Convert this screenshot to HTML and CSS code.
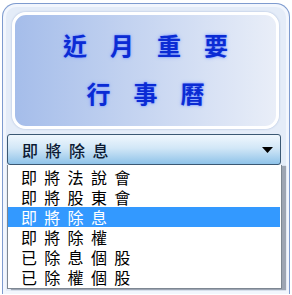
FILE: index.html
```html
<!DOCTYPE html>
<html lang="zh-Hant">
<head>
    <meta charset="UTF-8" />
    <title>近月重要行事曆</title>
    <link rel="stylesheet" href="styles.css">
</head>
<body>
    <div class="panel">
        <div class="title-box">
            <div class="title-line">近月重要</div>
            <div class="title-line">行事曆</div>
        </div>

        <!-- 下拉選單 (展開狀態) -->
        <div class="select-box">
            <span class="select-text">即將除息</span>
            <svg class="select-arrow" width="11" height="6" viewBox="0 0 11 6">
                <polygon points="0,0 11,0 5.5,6" fill="#000" />
            </svg>
        </div>
        <ul class="option-list">
            <li>即將法說會</li>
            <li>即將股東會</li>
            <li class="selected">即將除息</li>
            <li>即將除權</li>
            <li>已除息個股</li>
            <li>已除權個股</li>
        </ul>
    </div>
</body>
</html>
```

FILE: styles.css
```css
body {
    margin: 3px 2px 0 2px;
    background: #ffffff;
    font-family: "Noto Sans CJK TC", "Noto Sans", sans-serif;
}

.panel {
    height: 291px;
    box-sizing: border-box;
    border: 1px solid #7e9bcf;
    border-bottom: none;
    border-radius: 14px 14px 0 0;
    background: #e4ecf8;
    padding: 8px 4px 0 4px;
    box-shadow: inset 0 0 0 3px #f2f6fd;
}

.title-box {
    margin: 0 6px 0 5px;
    border: 3px solid #ffffff;
    border-radius: 14px;
    background: linear-gradient(to right, #a5bdea, #e9eef8);
    padding: 6px 0 9px 0;
    text-align: center;
    box-shadow: 0 0 2px rgba(90, 120, 180, 0.5);
}

.title-line {
    font-size: 24px;
    line-height: 48px;
    font-weight: bold;
    color: #0b2bd4;
    letter-spacing: 23px;
    padding-left: 23px;
    text-shadow: 0 0 2px #6f90ff, 0 0 4px #9fb6ff;
}

.select-box {
    margin-top: 5px;
    width: 274px;
    height: 31px;
    box-sizing: border-box;
    border: 1px solid #3b5873;
    border-radius: 3px;
    background: linear-gradient(to bottom, #f0f7fd, #d2e7f7 45%, #8fc3e9);
    display: flex;
    align-items: center;
    padding: 0 7px 0 14px;
}

.select-text {
    flex: 1;
    font-size: 16px;
    font-weight: 500;
    color: #0c1a33;
    letter-spacing: 7.5px;
}

.option-list {
    list-style: none;
    margin: 0;
    width: 275px;
    box-sizing: border-box;
    padding: 2px 1px 0 0;
    height: 124px;
    background: #ffffff;
    border: 1px solid #7d8792;
    border-top: none;
    box-shadow: 4px 1px 1px rgba(70, 80, 95, 0.45);
}

.option-list li {
    height: 20px;
    line-height: 20px;
    padding-left: 13px;
    font-size: 16px;
    color: #000000;
    letter-spacing: 7.3px;
}

.option-list li.selected {
    background: #3399ff;
    color: #ffffff;
}
```
